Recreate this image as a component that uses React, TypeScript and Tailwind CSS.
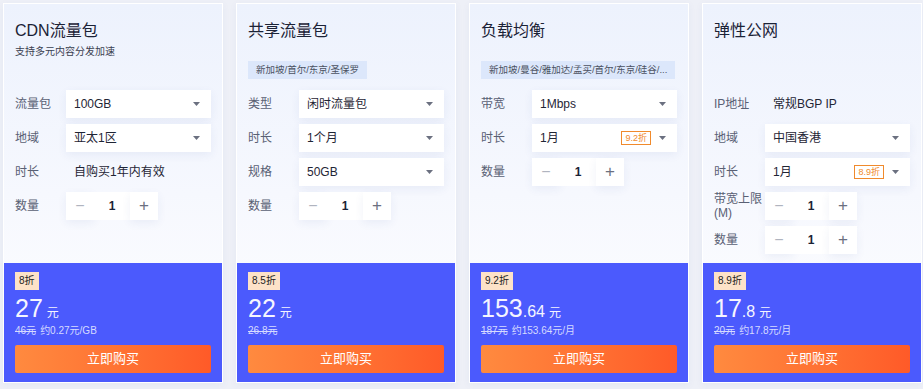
import React from "react"

type Row =
  | { kind: "select"; label: string; value: string; tag?: string }
  | { kind: "text"; label: string; value: string }
  | { kind: "stepper"; label: string }

type Product = {
  title: string
  subtitle?: string
  area?: string
  rows: Row[]
  discount: string
  price: string
  decimal?: string
  original: string
  unit: string
}

const products: Product[] = [
  {
    title: "CDN流量包",
    subtitle: "支持多元内容分发加速",
    rows: [
      { kind: "select", label: "流量包", value: "100GB" },
      { kind: "select", label: "地域", value: "亚太1区" },
      { kind: "text", label: "时长", value: "自购买1年内有效" },
      { kind: "stepper", label: "数量" },
    ],
    discount: "8折",
    price: "27",
    original: "46元",
    unit: "约0.27元/GB",
  },
  {
    title: "共享流量包",
    area: "新加坡/首尔/东京/圣保罗",
    rows: [
      { kind: "select", label: "类型", value: "闲时流量包" },
      { kind: "select", label: "时长", value: "1个月" },
      { kind: "select", label: "规格", value: "50GB" },
      { kind: "stepper", label: "数量" },
    ],
    discount: "8.5折",
    price: "22",
    original: "26.8元",
    unit: "",
  },
  {
    title: "负载均衡",
    area: "新加坡/曼谷/雅加达/孟买/首尔/东京/硅谷/...",
    rows: [
      { kind: "select", label: "带宽", value: "1Mbps" },
      { kind: "select", label: "时长", value: "1月", tag: "9.2折" },
      { kind: "stepper", label: "数量" },
    ],
    discount: "9.2折",
    price: "153",
    decimal: ".64",
    original: "187元",
    unit: "约153.64元/月",
  },
  {
    title: "弹性公网",
    rows: [
      { kind: "text", label: "IP地址", value: "常规BGP IP" },
      { kind: "select", label: "地域", value: "中国香港" },
      { kind: "select", label: "时长", value: "1月", tag: "8.9折" },
      { kind: "stepper", label: "带宽上限(M)" },
      { kind: "stepper", label: "数量" },
    ],
    discount: "8.9折",
    price: "17",
    decimal: ".8",
    original: "20元",
    unit: "约17.8元/月",
  },
]

function Arrow() {
  return (
    <svg width="7" height="4" viewBox="0 0 7 4" className="shrink-0">
      <path d="M0 0h7L3.5 4z" fill="#6b7080" />
    </svg>
  )
}

function Field({ row }: { row: Row }) {
  if (row.kind === "select") {
    return (
      <div className="flex h-[28px] flex-1 items-center bg-white pl-[8px] pr-[11px] shadow-[0_3px_10px_rgba(40,70,150,0.07)]">
        <span className="flex-1 text-[12px] text-[#1f2535]">{row.value}</span>
        {row.tag && (
          <span className="mr-[8px] flex h-[14px] items-center border border-[#f08a2c] px-[3px] text-[9px] leading-none text-[#f08a2c]">
            {row.tag}
          </span>
        )}
        <Arrow />
      </div>
    )
  }
  if (row.kind === "text") {
    return <div className="pl-[8px] text-[12px] text-[#1f2535]">{row.value}</div>
  }
  return (
    <div className="flex h-[28px] items-center">
      <button className="flex h-[28px] w-[28px] items-center justify-center bg-white text-[16px] font-light text-[#b0b4bf] shadow-[0_3px_10px_rgba(40,70,150,0.07)]">
        −
      </button>
      <div className="flex h-[28px] w-[36px] items-center justify-center bg-white text-[12px] font-bold text-[#1b2236]">1</div>
      <button className="flex h-[28px] w-[28px] items-center justify-center bg-white text-[17px] font-light text-[#6b7080] shadow-[0_3px_10px_rgba(40,70,150,0.07)]">
        +
      </button>
    </div>
  )
}

function Card({ p }: { p: Product }) {
  return (
    <div className="flex h-[380px] w-[220px] flex-col border border-white bg-gradient-to-b from-[#edf2fd] via-[#f6f8fe] to-white shadow-[0_2px_8px_rgba(40,70,150,0.05)]">
      <div className="flex-1 px-[11px]">
        <div className="flex h-[86px] flex-col items-start pt-[15px]">
          <h3 className="text-[16px] leading-6 text-[#1b2236]">{p.title}</h3>
          {p.subtitle && <p className="mt-[2px] text-[10px] leading-[14px] text-[#3a4050]">{p.subtitle}</p>}
          {p.area && (
            <div className="mt-[18px] h-[18px] max-w-full truncate bg-[#dce7fb] px-[8px] text-[9.5px] leading-[18px] text-[#4b5262]">
              {p.area}
            </div>
          )}
        </div>
        <div className="flex flex-col gap-[6px]">
          {p.rows.map((row, i) => (
            <div key={i} className="flex h-[28px] items-center">
              <span className="w-[51px] shrink-0 text-[12px] leading-[14px] text-[#596074]">{row.label}</span>
              <Field row={row} />
            </div>
          ))}
        </div>
      </div>
      <div className="flex h-[119px] flex-col items-start bg-[#4b5afd] px-[11px] pt-[9px]">
        <span className="h-[18px] bg-[#fde2c8] px-[4px] text-[10px] leading-[18px] text-[#222]">{p.discount}</span>
        <div className="mt-[4px] flex h-[28px] items-baseline leading-[28px] text-[#f5f5ff]">
          <span className="text-[25px]">{p.price}</span>
          {p.decimal && <span className="text-[16px]">{p.decimal}</span>}
          <span className="ml-[4px] text-[12px]">元</span>
        </div>
        <div className="mt-[3px] text-[10px] leading-[12px] text-[#d6dbff]">
          <span className="line-through">{p.original}</span>
          {p.unit && <span className="ml-[4px]">{p.unit}</span>}
        </div>
        <button className="mt-[8px] flex h-[28px] w-full items-center justify-center rounded-[2px] bg-gradient-to-r from-[#ff8a3f] to-[#ff5a28] text-[13px] text-white">
          立即购买
        </button>
      </div>
    </div>
  )
}

export default function App() {
  return (
    <div
      className="flex h-[389px] w-[923px] gap-[13px] bg-[#eef0f7] pl-[3px] pt-[3px]"
      style={{ fontFamily: '"Liberation Sans", "Noto Sans CJK SC", sans-serif' }}
    >
      {products.map((p) => (
        <Card key={p.title} p={p} />
      ))}
    </div>
  )
}
